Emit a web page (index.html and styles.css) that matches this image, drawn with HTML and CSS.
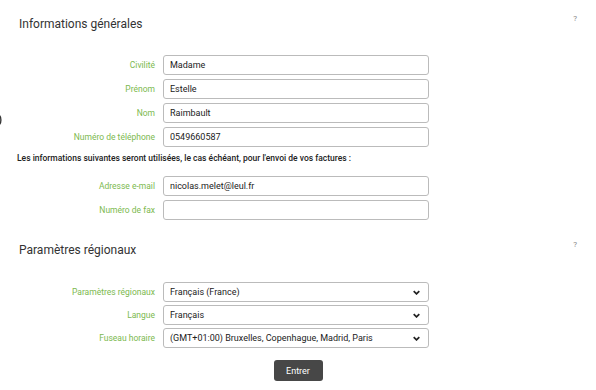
FILE: index.html
```html
<!DOCTYPE html>
<html lang="fr">
<head>
    <meta charset="UTF-8">
    <meta name="viewport" content="width=device-width, initial-scale=1.0">
    <title>Informations générales</title>
    <link rel="stylesheet" href="styles.css">
</head>
<body>
    <svg class="edge-mark" viewBox="0 0 4 12"><path d="M0 1c2.5 1.5 2.5 8.5 0 10" /></svg>

    <div class="section">
        <div class="section-head">
            <h2>Informations générales</h2>
            <span class="help">?</span>
        </div>

        <div class="form">
            <div class="row">
                <label>Civilité</label>
                <input type="text" value="Madame">
            </div>
            <div class="row">
                <label>Prénom</label>
                <input type="text" value="Estelle">
            </div>
            <div class="row">
                <label>Nom</label>
                <input type="text" value="Raimbault">
            </div>
            <div class="row">
                <label>Numéro de téléphone</label>
                <input type="text" value="0549660587">
            </div>
        </div>

        <p class="note">Les informations suivantes seront utilisées, le cas échéant, pour l'envoi de vos factures :</p>

        <div class="form">
            <div class="row">
                <label>Adresse e-mail</label>
                <input type="text" value="nicolas.melet@leul.fr">
            </div>
            <div class="row">
                <label>Numéro de fax</label>
                <input type="text" value="">
            </div>
        </div>
    </div>

    <div class="section regional">
        <div class="section-head">
            <h2>Paramètres régionaux</h2>
            <span class="help">?</span>
        </div>

        <div class="form">
            <div class="row">
                <label>Paramètres régionaux</label>
                <div class="select-wrap">
                    <select><option>Français (France)</option></select>
                    <svg class="chevron" viewBox="0 0 10 6"><path d="M1 1l4 4 4-4" /></svg>
                </div>
            </div>
            <div class="row">
                <label>Langue</label>
                <div class="select-wrap">
                    <select><option>Français</option></select>
                    <svg class="chevron" viewBox="0 0 10 6"><path d="M1 1l4 4 4-4" /></svg>
                </div>
            </div>
            <div class="row">
                <label>Fuseau horaire</label>
                <div class="select-wrap">
                    <select><option>(GMT+01:00) Bruxelles, Copenhague, Madrid, Paris</option></select>
                    <svg class="chevron" viewBox="0 0 10 6"><path d="M1 1l4 4 4-4" /></svg>
                </div>
            </div>
        </div>

        <div class="actions">
            <button>Entrer</button>
        </div>
    </div>
</body>
</html>
```

FILE: styles.css
```css
body {
    margin: 0;
    font-family: Roboto, "Liberation Sans", Arial, sans-serif;
    color: #333;
    background: #fff;
    position: relative;
}
.edge-mark {
    position: absolute;
    left: -1px;
    top: 114px;
    width: 4px;
    height: 12px;
    fill: none;
    stroke: #333;
    stroke-width: 1.4;
}
.section {
    padding-top: 16px;
}
.section-head {
    display: flex;
    justify-content: space-between;
    align-items: flex-start;
    padding: 0 19px;
    height: 16px;
}
h2 {
    margin: 0;
    font-size: 12px;
    line-height: 16px;
    font-weight: 400;
    color: #333;
}
.help {
    font-size: 8px;
    line-height: 10px;
    color: #888;
    margin-top: -2px;
}
.form {
    display: flex;
    flex-direction: column;
    gap: 4px;
    margin-top: 23px;
}
.row {
    display: flex;
    align-items: center;
}
label {
    width: 163px;
    padding-right: 8px;
    box-sizing: border-box;
    text-align: right;
    font-size: 8.5px;
    color: #7cb94f;
}
input, select {
    width: 266px;
    height: 20px;
    box-sizing: border-box;
    border: 1px solid #bbb;
    border-radius: 3px;
    padding: 0 6px;
    font-family: Roboto, "Liberation Sans", Arial, sans-serif;
    font-size: 9px;
    color: #222;
    background: #fff;
    outline: none;
}
.note {
    margin: 5px 0 0 17px;
    font-size: 8.5px;
    line-height: 12px;
    font-weight: 500;
    color: #222;
}
.note + .form {
    margin-top: 12px;
}
.regional {
    padding-top: 22px;
}
.regional .form {
    margin-top: 24px;
    gap: 3px;
}
.select-wrap {
    position: relative;
    display: flex;
    width: 266px;
    height: 20px;
}
select {
    appearance: none;
    -webkit-appearance: none;
}
.chevron {
    position: absolute;
    right: 9px;
    top: 8px;
    width: 7px;
    height: 5px;
    fill: none;
    stroke: #222;
    stroke-width: 2.4;
    pointer-events: none;
}
.actions {
    display: flex;
    justify-content: center;
    margin-top: 12px;
}
button {
    width: 49px;
    height: 21px;
    border: none;
    border-radius: 3px;
    background: #474747;
    color: #fff;
    font-family: Roboto, "Liberation Sans", Arial, sans-serif;
    font-size: 9px;
}
```
